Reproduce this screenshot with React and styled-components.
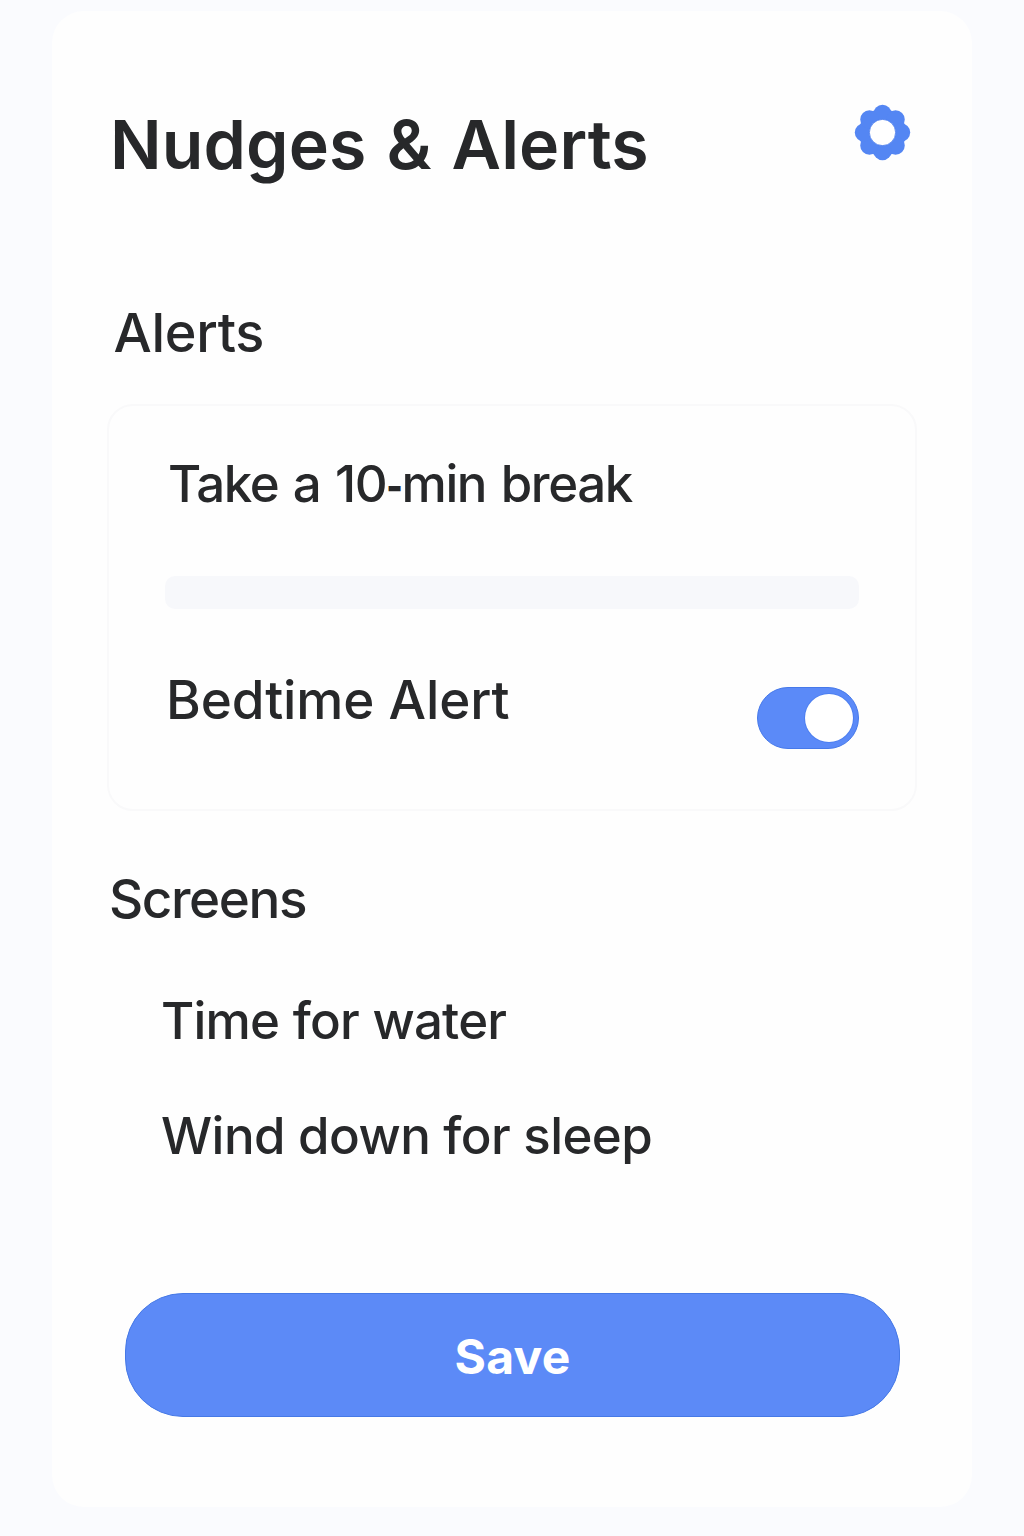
import React, { useState } from "react";
import styled, { createGlobalStyle } from "styled-components";

const GlobalStyle = createGlobalStyle`
  * { box-sizing: border-box; }
  body {
    margin: 0;
    background: #fafbfe;
    color: #27282a;
    font-family: Inter, "Liberation Sans", sans-serif;
  }
`;

const Page = styled.div`
  display: flex;
  justify-content: center;
  height: 1536px;
  padding: 11px 52px 29px;
`;

const Sheet = styled.main`
  display: flex;
  flex-direction: column;
  width: 920px;
  height: 1496px;
  padding: 93px 55px 0;
  border-radius: 32px;
  background: #fefefe;
`;

const Header = styled.header`
  display: flex;
  justify-content: space-between;
  align-items: flex-start;
  height: 80px;
  padding: 0 6px 0 3px;
`;

const Title = styled.h1`
  margin: 0;
  font-size: 68px;
  font-weight: 600;
  line-height: 80px;
  letter-spacing: 0.1px;
  word-spacing: 2.8px;
  white-space: nowrap;
`;

const SectionTitle = styled.h2`
  margin: ${(p) => p.$top}px 0 0 ${(p) => p.$indent}px;
  font-size: ${(p) => p.$size}px;
  font-weight: 500;
  line-height: 64px;
  letter-spacing: ${(p) => p.$tracking}px;
  white-space: nowrap;
`;

const Label = styled.span`
  height: 60px;
  padding-left: ${(p) => p.$indent || 0}px;
  font-size: ${(p) => p.$size || 51}px;
  font-weight: 500;
  line-height: 60px;
  letter-spacing: ${(p) => p.$tracking}px;
  word-spacing: ${(p) => p.$wordGap || 0}px;
  white-space: nowrap;
`;

const ShortHyphen = styled.span`
  font-size: 35px;
  font-weight: 900;
  line-height: 1;
  vertical-align: 3px;
`;

const Panel = styled.section`
  display: flex;
  flex-direction: column;
  height: 407px;
  margin-top: 39px;
  padding: 48px 56px 0;
  border: 2px solid #f9f9fa;
  border-radius: 26px;
`;

const Track = styled.div`
  height: 33px;
  margin-top: 62px;
  border-radius: 10px;
  background: #f7f8fb;
`;

const ToggleRow = styled.div`
  display: flex;
  justify-content: space-between;
  align-items: flex-start;
  margin-top: 61px;
`;

const Toggle = styled.button`
  display: flex;
  justify-content: ${(p) => (p.$on ? "flex-end" : "flex-start")};
  align-items: center;
  width: 102px;
  height: 62px;
  margin: 17px 0 0;
  padding: 0 5px;
  border: 1px solid ${(p) => (p.$on ? "#4679ea" : "#d5d8df")};
  border-radius: 31px;
  background: ${(p) => (p.$on ? "#5b8af8" : "#e3e6ec")};
  cursor: pointer;
`;

const Knob = styled.span`
  width: 48px;
  height: 48px;
  border-radius: 50%;
  background: #fff;
  box-shadow: 0 0 0 1px #4d7ff0;
`;

const List = styled.ul`
  display: flex;
  flex-direction: column;
  gap: 55px;
  margin: 60px 0 0;
  padding: 0 0 0 54px;
  list-style: none;
`;

const Item = styled.li`
  display: flex;
  height: 60px;
`;

const SaveButton = styled.button`
  width: 775px;
  height: 124px;
  margin: 127px 0 0 18px;
  padding: 3px 0 0;
  border: 1px solid #4679e6;
  border-radius: 58px;
  background: #5c8af7;
  color: #fff;
  font-family: inherit;
  font-size: 48px;
  font-weight: 700;
  letter-spacing: 0.3px;
  cursor: pointer;
`;

const GearSvg = styled.svg`
  display: block;
  width: 57px;
  height: 57px;
`;

const PETALS = [0, 45, 90, 135, 180, 225, 270, 315];

function Gear() {
  return (
    <GearSvg viewBox="-28.5 -28.5 57 57" role="img" aria-label="Settings">
      <g fill="#5486f3">
        <circle r="23.6" />
        {PETALS.map((angle) => (
          <circle key={angle} cy="-18.5" r="9.2" transform={`rotate(${angle})`} />
        ))}
      </g>
      <circle r="13.1" fill="#fff" stroke="#4a7cec" strokeWidth="0.8" />
    </GearSvg>
  );
}

export default function App() {
  const [bedtime, setBedtime] = useState(true);
  return (
    <>
      <GlobalStyle />
      <Page>
        <Sheet>
          <Header>
            <Title>Nudges &amp; Alerts</Title>
            <Gear />
          </Header>

          <SectionTitle $top={117} $indent={6.5} $size={54} $tracking={-0.3}>
            Alerts
          </SectionTitle>
          <Panel>
            <Label $indent={3} $tracking={-1.4} $wordGap={2.4}>
              Take a 10<ShortHyphen>-</ShortHyphen>min break
            </Label>
            <Track />
            <ToggleRow>
              <Label $indent={1} $size={53} $tracking={-0.1}>Bedtime Alert</Label>
              <Toggle
                $on={bedtime}
                role="switch"
                aria-checked={bedtime}
                aria-label="Bedtime Alert"
                onClick={() => setBedtime(!bedtime)}
              >
                <Knob />
              </Toggle>
            </ToggleRow>
          </Panel>

          <SectionTitle $top={56} $indent={2} $size={53} $tracking={-1.4}>
            Screens
          </SectionTitle>
          <List>
            <Item>
              <Label $tracking={-0.8} $wordGap={0.8}>Time for water</Label>
            </Item>
            <Item>
              <Label $tracking={-0.55}>Wind down for sleep</Label>
            </Item>
          </List>

          <SaveButton>Save</SaveButton>
        </Sheet>
      </Page>
    </>
  );
}
